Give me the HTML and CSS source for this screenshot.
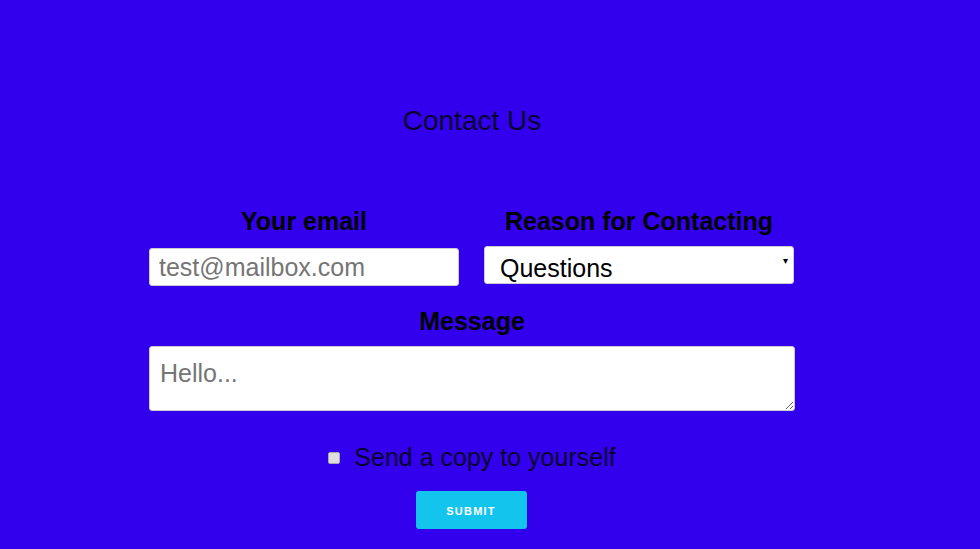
FILE: index.html
```html
<!DOCTYPE html>
<html>
<head>
<meta charset="utf-8">
<title>Contact Us</title>
<link rel="stylesheet" href="styles.css">
</head>
<body>
<main class="page">
  <h1 class="title">Contact Us</h1>
  <div class="row">
    <div class="field">
      <label class="label" for="email">Your email</label>
      <input class="input" id="email" type="email" placeholder="test@mailbox.com">
    </div>
    <div class="field">
      <label class="label" for="reason">Reason for Contacting</label>
      <div class="select-wrap">
        <select class="select" id="reason">
          <option>Questions</option>
          <option>Feedback</option>
          <option>Other</option>
        </select>
        <span class="arrow">&#9662;</span>
      </div>
    </div>
  </div>
  <div class="field field-wide">
    <label class="label label-msg" for="msg">Message</label>
    <textarea class="textarea" id="msg" placeholder="Hello..."></textarea>
  </div>
  <div class="check-row">
    <input class="check" type="checkbox" id="copy">
    <label class="check-label" for="copy">Send a copy to yourself</label>
  </div>
  <div class="btn-row">
    <button class="submit" type="submit">SUBMIT</button>
  </div>
</main>
</body>
</html>
```
FILE: styles.css
```css
html, body {
  margin: 0;
  padding: 0;
  background: #3300ee;
  height: 100%;
  overflow: hidden;
}
body {
  font-family: "Liberation Sans", Arial, sans-serif;
  color: #000;
}
.page {
  width: 646px;
  padding: 105px 0 0 149px;
  display: flex;
  flex-direction: column;
}
.title {
  margin: 0;
  font-size: 28px;
  line-height: 32px;
  font-weight: normal;
  text-align: center;
  color: #0a0030;
}
.row {
  display: flex;
  gap: 25px;
  margin-top: 70px;
  align-items: flex-start;
}
.field {
  width: 310px;
  display: flex;
  flex-direction: column;
  align-items: center;
}
.field-wide {
  width: 646px;
  margin-top: 21px;
}
.label {
  font-size: 25px;
  line-height: 28px;
  font-weight: bold;
}
.input {
  box-sizing: border-box;
  width: 310px;
  height: 38px;
  margin-top: 13px;
  border: 1px solid #ccc;
  border-radius: 3px;
  background: #fff;
  font-family: "Liberation Sans", Arial, sans-serif;
  font-size: 25px;
  padding: 0 9px;
  color: #000;
  outline: none;
}
.input::placeholder, .textarea::placeholder {
  color: #757575;
}
.select-wrap {
  position: relative;
  width: 310px;
  height: 38px;
  margin-top: 11px;
}
.select {
  appearance: none;
  -webkit-appearance: none;
  box-sizing: border-box;
  width: 310px;
  height: 38px;
  border: 1px solid #ccc;
  border-radius: 3px;
  background: #fff;
  font-family: "Liberation Sans", Arial, sans-serif;
  font-size: 25px;
  padding: 6px 0 0 15px;
  color: #000;
  outline: none;
}
.arrow {
  position: absolute;
  right: 6px;
  top: 9px;
  font-size: 10px;
  color: #000;
  pointer-events: none;
}
.textarea {
  box-sizing: border-box;
  width: 646px;
  height: 65px;
  margin-top: 11px;
  border: 1px solid #ccc;
  border-radius: 3px;
  background: #fff;
  font-family: "Liberation Sans", Arial, sans-serif;
  font-size: 25px;
  line-height: 29px;
  padding: 12px 10px;
  resize: vertical;
  outline: none;
}
.check-row {
  display: flex;
  justify-content: center;
  align-items: center;
  gap: 14px;
  margin-top: 32px;
  height: 28px;
}
.check {
  appearance: none;
  -webkit-appearance: none;
  box-sizing: border-box;
  width: 12px;
  height: 12px;
  margin: 2px 0 0 0;
  border: 1px solid #a8a8a8;
  border-radius: 2px;
  background: #dedede;
}
.check-label {
  font-size: 25px;
  line-height: 28px;
  color: #0a0030;
}
.btn-row {
  display: flex;
  justify-content: center;
  margin-top: 20px;
}
.submit {
  width: 111px;
  height: 38px;
  margin-right: 2px;
  border: none;
  border-radius: 3px;
  background: #13c4ec;
  color: #fff;
  font-family: "Liberation Sans", Arial, sans-serif;
  font-size: 11px;
  font-weight: bold;
  letter-spacing: 1.2px;
  padding: 2px 0 0 0;
}
```
